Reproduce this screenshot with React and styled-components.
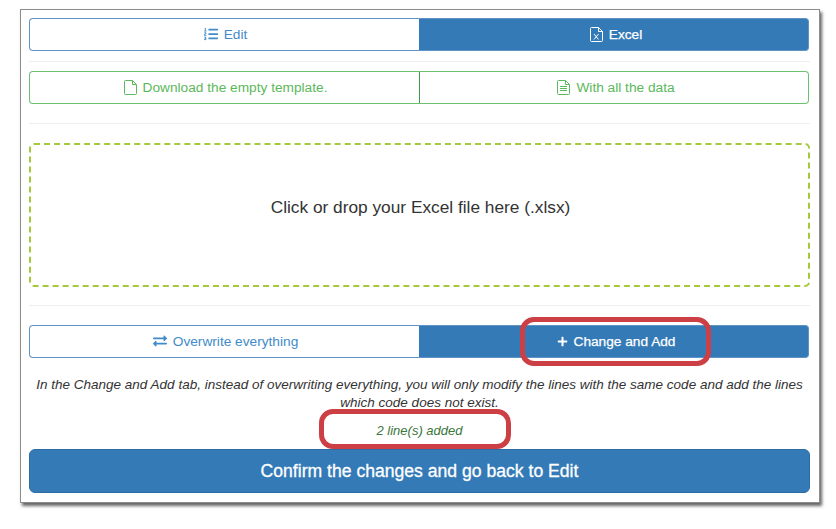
import React from "react";
import styled, { createGlobalStyle } from "styled-components";
import { FaListOl, FaExchangeAlt, FaPlus } from "react-icons/fa";

const GlobalStyle = createGlobalStyle`
  html, body {
    margin: 0;
    background: #fff;
  }
  * {
    box-sizing: border-box;
  }
`;

const Page = styled.div`
  width: 836px;
  height: 529px;
  padding: 9px 0 0 20px;
  font-family: "Liberation Sans", Arial, sans-serif;
  font-size: 13.7px;
  color: #333;
`;

const Panel = styled.div`
  position: relative;
  width: 800px;
  height: 494px;
  padding: 8px 9px 0 8px;
  background: #fff;
  border: 1px solid #8c8c8c;
  box-shadow: 2px 3px 3px rgba(50, 50, 50, 0.75);
`;

const ButtonRow = styled.div`
  display: flex;
  height: 33px;
  margin-right: 1px;
`;

const Segment = styled.div`
  flex: 0 0 calc(50% - 1px);
  display: flex;
  align-items: center;
  justify-content: center;
  gap: 6px;
  padding: 0 0 1px 2px;
  border-width: 1px;
  border-style: solid;
  border-color: ${(p) => (p.$green ? "#6cc070" : "#5f93c4")};
  background: ${(p) => (p.$active ? "#337ab7" : "#fff")};
  color: ${(p) => (p.$active ? "#fff" : p.$green ? "#5cb85c" : "#428bca")};
  -webkit-text-stroke: ${(p) => (p.$active ? "0.25px #fff" : "0")};

  &:first-child {
    flex-basis: calc(50% + 1px);
    border-radius: 4px 0 0 4px;
    border-right-color: ${(p) => (p.$green ? "#3c9a40" : "#337ab7")};
  }
  &:last-child {
    padding-left: 4px;
    border-radius: 0 4px 4px 0;
    border-left: 0;
  }

  svg {
    font-size: 14px;
  }
`;

const PlusIcon = styled(FaPlus)`
  && {
    font-size: 11px;
  }
`;

const Rule = styled.hr`
  height: 1px;
  margin: ${(p) => p.$top}px 0 ${(p) => p.$bottom}px;
  border: 0;
  background: #eee;
`;

const DropZone = styled.div`
  display: flex;
  align-items: center;
  justify-content: center;
  height: 144px;
  padding: 0 0 16px 2px;
  border: 2px dashed #a4c93a;
  border-radius: 5px;
  font-size: 17.3px;
  color: #333;
`;

const Help = styled.p`
  margin: 18px 0 0;
  font-size: 13.5px;
  line-height: 18px;
  font-style: italic;
  text-align: center;
  color: #333;
`;

const Result = styled.p`
  margin: 10px 0 0;
  font-size: 13px;
  line-height: 18px;
  font-style: italic;
  text-align: center;
  color: #3c763d;
`;

const Confirm = styled.div`
  display: flex;
  align-items: center;
  justify-content: center;
  height: 44px;
  margin-top: 9px;
  background: #337ab7;
  border: 1px solid #2e6da4;
  border-radius: 6px;
  color: #fff;
  font-size: 17.6px;
  -webkit-text-stroke: 0.3px #fff;
`;

const Callout = styled.div`
  position: absolute;
  left: ${(p) => p.$left}px;
  top: ${(p) => p.$top}px;
  width: ${(p) => p.$width}px;
  height: ${(p) => p.$height}px;
  border: 5px solid #cc4045;
  border-radius: 14px;
`;

// thin outlined sheet, what sits on it comes in as children
function FileIcon({ children }) {
  return (
    <svg width="13" height="15" viewBox="0 0 13 15" fill="none" stroke="currentColor" strokeWidth="1">
      <path d="M1.5 .5H8.5L12.5 4.5V13.5Q12.5 14.5 11.5 14.5H1.5Q.5 14.5 .5 13.5V1.5Q.5 .5 1.5 .5Z" />
      <path d="M8.5 .5V4.5H12.5" />
      {children}
    </svg>
  );
}

export default function App() {
  return (
    <Page>
      <GlobalStyle />
      <Panel>
        <ButtonRow>
          <Segment><FaListOl />Edit</Segment>
          <Segment $active>
            <FileIcon><path d="M4 7L8.5 12.5M8.5 7L4 12.5" /></FileIcon>
            Excel
          </Segment>
        </ButtonRow>
        <Rule $top={10} $bottom={9} />
        <ButtonRow>
          <Segment $green><FileIcon />Download the empty template.</Segment>
          <Segment $green>
            <FileIcon><path d="M3 6.5H10M3 8.5H10M3 10.5H10" /></FileIcon>
            With all the data
          </Segment>
        </ButtonRow>
        <Rule $top={19} $bottom={19} />
        <DropZone>Click or drop your Excel file here (.xlsx)</DropZone>
        <Rule $top={18} $bottom={19} />
        <ButtonRow>
          <Segment><FaExchangeAlt />Overwrite everything</Segment>
          <Segment $active><PlusIcon />Change and Add</Segment>
        </ButtonRow>
        <Help>
          In the Change and Add tab, instead of overwriting everything, you will only modify the lines with the same code and add the lines which code does not exist.
        </Help>
        <Result>2 line(s) added</Result>
        <Confirm>Confirm the changes and go back to Edit</Confirm>
        <Callout $left={499} $top={307} $width={191} $height={49} />
        <Callout $left={298} $top={399} $width={192} $height={40} />
      </Panel>
    </Page>
  );
}
